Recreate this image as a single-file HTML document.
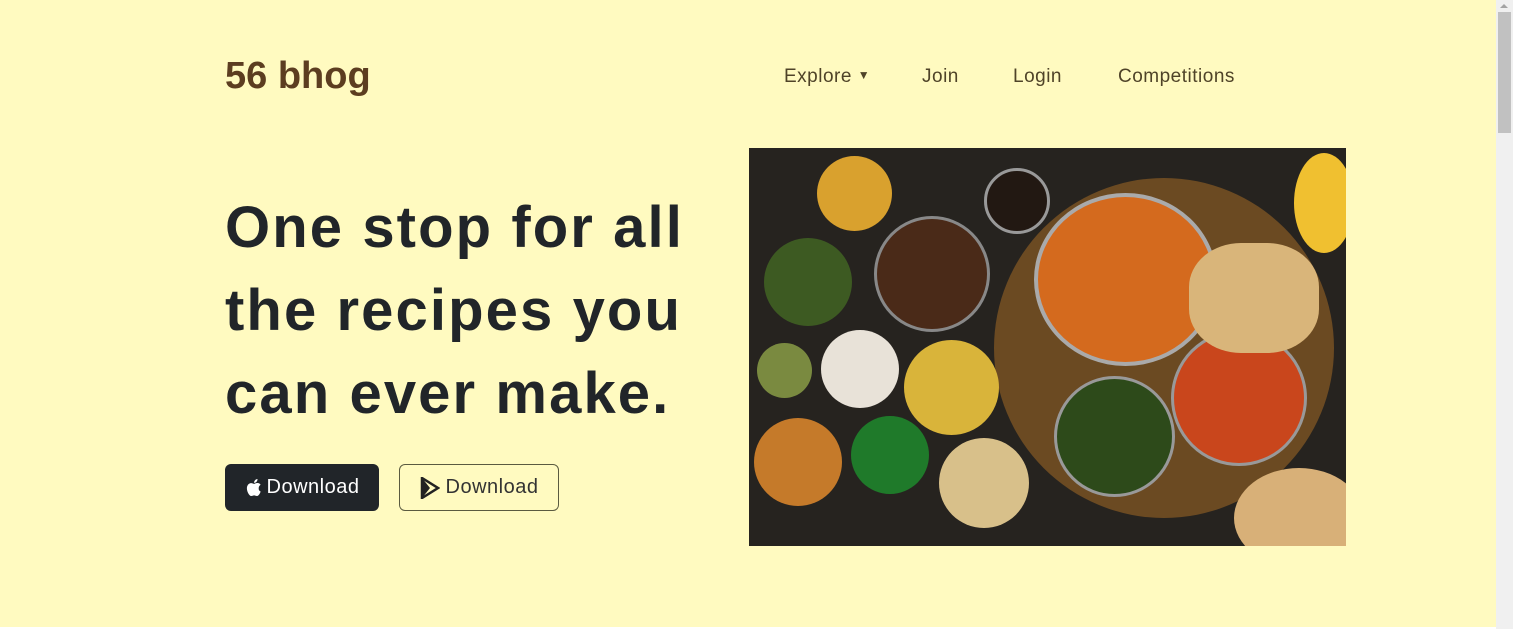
<!DOCTYPE html>
<html><head><meta charset="utf-8"><style>
html,body{margin:0;padding:0;width:1513px;height:629px;overflow:hidden;background:#fffac0;font-family:"Liberation Sans",sans-serif}
.sb{position:absolute;left:1496px;top:0;width:17px;height:629px;background:#f0f0f0}
.sb .th{position:absolute;left:2px;top:12px;width:13px;height:121px;background:#c1c1c1}
.sb .ar{position:absolute;left:4px;top:4px;border:4px solid transparent;border-bottom:4px solid #a3a3a3;border-top:0}
.logo{position:absolute;left:225px;top:55px;font-size:38px;font-weight:bold;color:#5c3d20;letter-spacing:0}
.nav{position:absolute;top:66px;font-size:19px;color:#4f4328;letter-spacing:0.5px}
h1{position:absolute;left:225px;top:186px;margin:0;font-size:58px;line-height:83px;font-weight:900;color:#212529;letter-spacing:2.1px}
.btn{position:absolute;top:464px;height:47px;border-radius:6px;box-sizing:border-box;font-size:20px;display:flex;align-items:center;justify-content:center;letter-spacing:0.5px}
.b1{left:225px;width:154px;background:#212529;color:#fff}
.b2{left:399px;width:160px;border:1px solid #5a5a40;color:#333}
.img{position:absolute;left:749px;top:148px;width:597px;height:398px;background:#26231f;overflow:hidden}
.c{position:absolute;border-radius:50%}
.bot{position:absolute;left:0;top:627px;width:1496px;height:2px;background:#fff}
</style></head><body>
<div class="logo">56 bhog</div>
<div class="nav" style="left:784px">Explore <span style="font-size:12px;vertical-align:3px">▼</span></div>
<div class="nav" style="left:922px">Join</div>
<div class="nav" style="left:1013px">Login</div>
<div class="nav" style="left:1118px">Competitions</div>
<h1>One stop for all<br>the recipes you<br>can ever make.</h1>
<div class="btn b1"><svg width="17" height="19" viewBox="0 0 17 20" style="margin-right:5px"><path d="M14 10.6c0-2.3 1.9-3.4 2-3.5-1.1-1.6-2.8-1.8-3.4-1.8-1.4-.1-2.8.9-3.5.9-.7 0-1.9-.8-3-.8C4.5 5.4 3.1 6.3 2.3 7.7.7 10.5 1.9 14.6 3.4 16.8c.8 1.1 1.7 2.3 2.8 2.2 1.1 0 1.6-.7 2.9-.7 1.4 0 1.8.7 3 .7 1.2 0 2-1.1 2.7-2.2.9-1.3 1.2-2.5 1.2-2.6-.1 0-2.4-.9-2-3.6zM11.8 3.8c.6-.8 1-1.8.9-2.8-.9 0-2 .6-2.6 1.4-.6.7-1.1 1.7-.9 2.7 1 .1 2-.5 2.6-1.3z" fill="#fff"/></svg>Download</div>
<div class="btn b2"><svg width="20" height="22" viewBox="0 0 20 22" style="margin-right:6px"><path d="M2 1L18 11L2 21Z" fill="none" stroke="#222" stroke-width="2.5"/><path d="M2 1L10 11L2 21Z" fill="#222"/></svg>Download</div>
<div class="img">
<div class="c" style="left:245px;top:30px;width:340px;height:340px;background:#6b4a22"></div>
<div class="c" style="left:285px;top:45px;width:175px;height:165px;background:#d46a1e;border:4px solid #aaa"></div>
<div class="c" style="left:422px;top:182px;width:130px;height:130px;background:#c9461c;border:3px solid #999"></div>
<div class="c" style="left:305px;top:228px;width:115px;height:115px;background:#2d4a1a;border:3px solid #999"></div>
<div class="c" style="left:68px;top:8px;width:75px;height:75px;background:#d9a12e"></div>
<div class="c" style="left:125px;top:68px;width:110px;height:110px;background:#4a2a18;border:3px solid #888"></div>
<div class="c" style="left:15px;top:90px;width:88px;height:88px;background:#3d5a22"></div>
<div class="c" style="left:72px;top:182px;width:78px;height:78px;background:#e8e2d8"></div>
<div class="c" style="left:155px;top:192px;width:95px;height:95px;background:#d9b43a"></div>
<div class="c" style="left:5px;top:270px;width:88px;height:88px;background:#c57a2a"></div>
<div class="c" style="left:102px;top:268px;width:78px;height:78px;background:#1f7a2a"></div>
<div class="c" style="left:190px;top:290px;width:90px;height:90px;background:#d8c08a"></div>
<div class="c" style="left:440px;top:95px;width:130px;height:110px;background:#d9b57a;border-radius:40%"></div>
<div class="c" style="left:545px;top:5px;width:60px;height:100px;background:#f0c030"></div>
<div class="c" style="left:485px;top:320px;width:130px;height:100px;background:#d8b078"></div>
<div class="c" style="left:235px;top:20px;width:60px;height:60px;background:#221812;border:3px solid #999"></div>
<div class="c" style="left:8px;top:195px;width:55px;height:55px;background:#7a8a40"></div>
</div>
<div class="bot"></div>
<div class="sb"><div class="ar"></div><div class="th"></div></div>
</body></html>
